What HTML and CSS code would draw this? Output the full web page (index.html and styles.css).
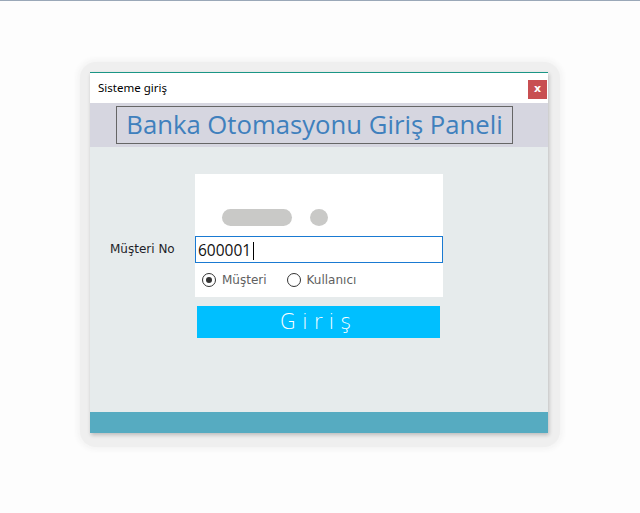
FILE: index.html
```html
<!DOCTYPE html>
<html lang="tr">
<head>
<meta charset="utf-8">
<link rel="stylesheet" href="styles.css">
</head>
<body>
<div class="topline"></div>
<div class="frame">
  <div class="window">
    <div class="titlebar">
      <span class="title">Sisteme giriş</span>
      <span class="close">x</span>
    </div>
    <div class="header">
      <div class="header-box">Banka Otomasyonu Giriş Paneli</div>
    </div>
    <div class="content">
      <div class="label">Müşteri No</div>
      <div class="col">
        <div class="panel">
          <div class="loader">
            <span class="pill"></span>
            <span class="dot"></span>
          </div>
          <div class="input">600001<span class="caret"></span></div>
          <div class="radios">
            <label class="radio"><span class="circle checked"></span>Müşteri</label>
            <label class="radio"><span class="circle"></span>Kullanıcı</label>
          </div>
        </div>
        <div class="button">Giriş</div>
      </div>
    </div>
    <div class="footer"></div>
  </div>
</div>
</body>
</html>
```

FILE: styles.css
```css
html, body {
  margin: 0;
  padding: 0;
  background: #fdfdfd;
}
body {
  width: 640px;
  height: 513px;
  overflow: hidden;
  font-family: "Open Sans", "Noto Sans", sans-serif;
}
.topline {
  height: 1px;
  background: #9aa8b8;
}
.frame {
  margin: 61px 0 0 80px;
  width: 460px;
  padding: 10px 10px 14px 10px;
  border-radius: 16px;
  background: #efefef;
  box-shadow: 0 0 5px 3px #f4f4f4;
}
.window {
  width: 458px;
  border-top: 1px solid #1b9686;
  box-shadow: 1px 2px 4px rgba(0,0,0,0.22);
  display: flex;
  flex-direction: column;
}
.titlebar {
  height: 30px;
  background: #ffffff;
  display: flex;
  align-items: flex-start;
  justify-content: space-between;
}
.title {
  font-size: 11.5px;
  color: #000;
  margin: 7px 0 0 8px;
  font-family: "Noto Sans", sans-serif;
}
.close {
  width: 19px;
  height: 19px;
  margin: 7px 1px 0 0;
  background: #c84f52;
  color: #fff;
  font-family: "DejaVu Sans", sans-serif;
  font-weight: bold;
  font-size: 11px;
  line-height: 17px;
  text-align: center;
}
.header {
  height: 44px;
  background: #d6d6e0;
  padding: 3px 0 0 26px;
  box-sizing: border-box;
}
.header-box {
  width: 397px;
  height: 38px;
  box-sizing: border-box;
  border: 1px solid #666666;
  color: #3f80bd;
  font-family: "Open Sans", sans-serif;
  font-size: 25.7px;
  line-height: 35px;
  text-align: center;
}
.content {
  height: 265px;
  background: #e6ebec;
  display: flex;
  padding-top: 27px;
  box-sizing: border-box;
}
.label {
  width: 85px;
  margin: 62px 0 0 20px;
  height: 27px;
  line-height: 27px;
  font-family: "DejaVu Sans", sans-serif;
  font-size: 12px;
  color: #1e1e28;
}
.col {
  display: flex;
  flex-direction: column;
}
.panel {
  width: 248px;
  height: 123px;
  background: #ffffff;
}
.loader {
  height: 62px;
  display: flex;
  align-items: flex-start;
  padding: 35px 0 0 27px;
  box-sizing: border-box;
}
.pill {
  width: 70px;
  height: 17px;
  border-radius: 9px;
  background: #c9c9c7;
}
.dot {
  width: 18px;
  height: 17px;
  border-radius: 50%;
  background: #c9c9c7;
  margin-left: 18px;
}
.input {
  height: 27px;
  box-sizing: border-box;
  border: 1px solid #1a7ad2;
  font-family: "Open Sans", sans-serif;
  font-size: 15.5px;
  line-height: 24px;
  padding-left: 2px;
  color: #111;
  display: flex;
  align-items: center;
}
.caret {
  width: 1px;
  height: 18px;
  background: #000;
  margin: 3px 0 0 2px;
}
.radios {
  display: flex;
  padding: 10px 0 0 7px;
}
.radio {
  display: flex;
  align-items: center;
  font-family: "DejaVu Sans", sans-serif;
  font-size: 12px;
  color: #606060;
  margin-right: 20px;
}
.circle {
  width: 12px;
  height: 12px;
  border: 1px solid #333;
  border-radius: 50%;
  margin-right: 6px;
  position: relative;
  background: #fff;
}
.circle.checked::after {
  content: "";
  position: absolute;
  left: 3px;
  top: 3px;
  width: 6px;
  height: 6px;
  border-radius: 50%;
  background: #333;
}
.button {
  margin: 9px 0 0 2px;
  width: 243px;
  height: 32px;
  background: #00bfff;
  color: #ffffff;
  font-family: "DejaVu Sans", sans-serif;
  font-size: 21px;
  letter-spacing: 6px;
  line-height: 32px;
  text-align: center;
  font-weight: 300;
}
.footer {
  height: 21px;
  background: #56abc1;
}
```
